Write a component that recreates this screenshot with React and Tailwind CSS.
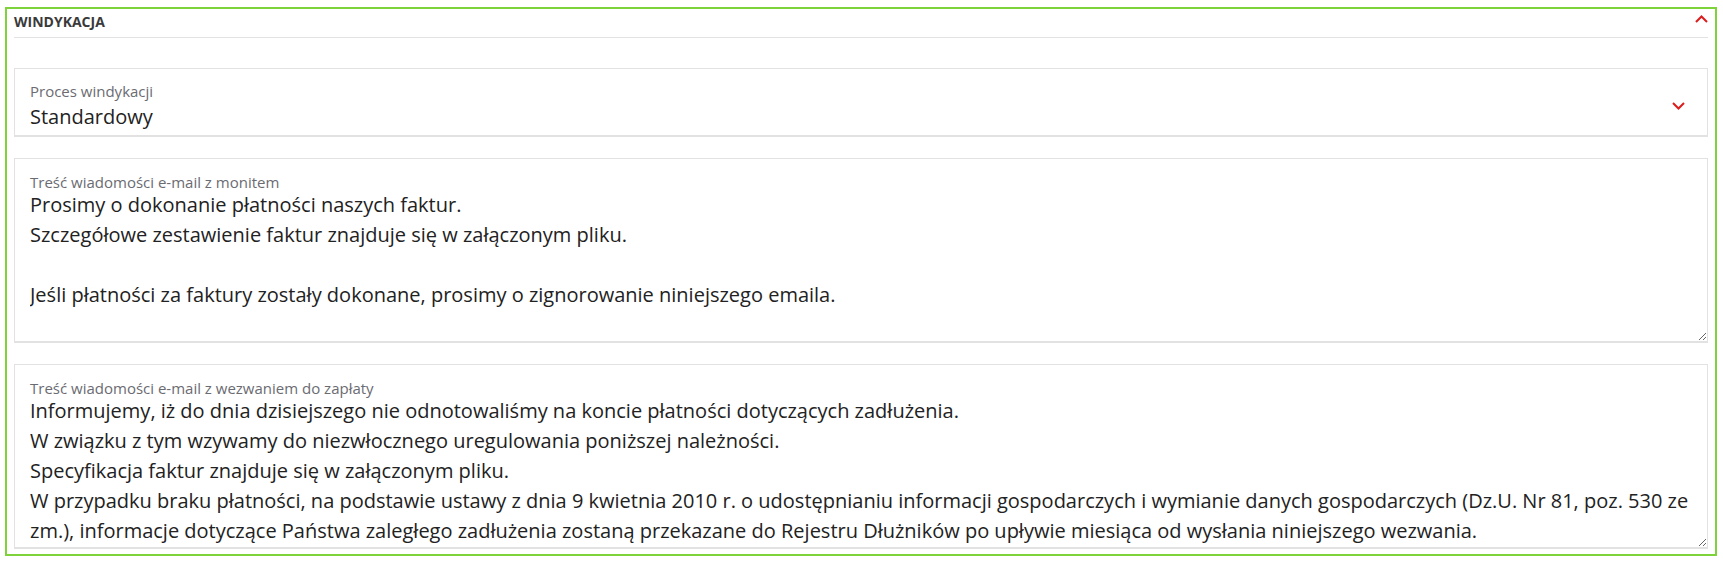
const monitText =
  "Prosimy o dokonanie płatności naszych faktur.\nSzczegółowe zestawienie faktur znajduje się w załączonym pliku.\n\nJeśli płatności za faktury zostały dokonane, prosimy o zignorowanie niniejszego emaila.";

const wezwanieText =
  "Informujemy, iż do dnia dzisiejszego nie odnotowaliśmy na koncie płatności dotyczących zadłużenia.\nW związku z tym wzywamy do niezwłocznego uregulowania poniższej należności.\nSpecyfikacja faktur znajduje się w załączonym pliku.\nW przypadku braku płatności, na podstawie ustawy z dnia 9 kwietnia 2010 r. o udostępnianiu informacji gospodarczych i wymianie danych gospodarczych (Dz.U. Nr 81, poz. 530 ze\nzm.), informacje dotyczące Państwa zaległego zadłużenia zostaną przekazane do Rejestru Dłużników po upływie miesiąca od wysłania niniejszego wezwania.";

function Chevron({ up, className = "" }) {
  return (
    <svg width="13" height="8" viewBox="0 0 13 8" fill="none" className={"shrink-0 " + className}>
      <polyline
        points={up ? "1,7 6.5,1.5 12,7" : "1,1 6.5,6.5 12,1"}
        stroke="#dd1c1c"
        strokeWidth="2"
      />
    </svg>
  );
}

function TextField({ label, value }) {
  return (
    <div className="flex h-[185px] flex-col border border-b-2 border-[#e2e2e2] pl-[15px] pt-[16px]">
      <label className="block text-[15px] leading-[15px] text-[#6b6b72]">{label}</label>
      <textarea
        readOnly
        wrap="off"
        defaultValue={value}
        className="block w-full flex-1 overflow-hidden border-0 bg-transparent p-0 text-[20px] leading-[30px] text-[#222] outline-none"
      />
    </div>
  );
}

export default function App() {
  return (
    <div
      className="bg-white pl-[5px] pr-[6px] pt-[7px] pb-[6px]"
      style={{ fontFamily: '"Open Sans", "Noto Sans", sans-serif' }}
    >
      <div className="border-2 border-[#7fd33a] px-[7px] pb-[5px]">
        {/* Header */}
        <div className="flex h-[29px] items-start justify-between border-b border-[#e2e2e2] pt-[6px]">
          <span className="text-[14px] font-bold leading-[14px] text-[#3a3a3a]">WINDYKACJA</span>
          <Chevron up />
        </div>

        {/* Select */}
        <div className="mt-[30px] flex h-[69px] items-start justify-between border border-b-2 border-[#e2e2e2] pl-[15px] pr-[22px]">
          <div className="flex flex-col pt-[15px]">
            <span className="text-[15px] leading-[15px] text-[#6b6b72]">Proces windykacji</span>
            <span className="mt-[6px] text-[20px] leading-[24px] text-[#222]">Standardowy</span>
          </div>
          <Chevron className="mt-[33px]" />
        </div>

        <div className="mt-[21px]">
          <TextField label="Treść wiadomości e-mail z monitem" value={monitText} />
        </div>
        <div className="mt-[21px]">
          <TextField label="Treść wiadomości e-mail z wezwaniem do zapłaty" value={wezwanieText} />
        </div>
      </div>
    </div>
  );
}
